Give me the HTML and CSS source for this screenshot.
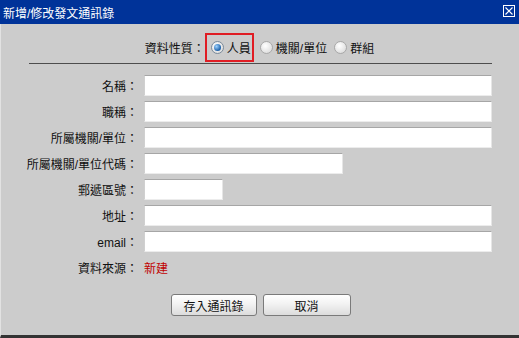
FILE: index.html
```html
<!DOCTYPE html>
<html lang="zh-Hant">
<head>
    <meta charset="UTF-8">
    <title>新增/修改發文通訊錄</title>
    <link rel="stylesheet" href="styles.css">
</head>
<body>
    <div class="dialog">
        <div class="titlebar">
            <span class="title">新增/修改發文通訊錄</span>
            <span class="close-btn">
                <svg width="12" height="12" viewBox="0 0 12 12">
                    <rect x="0.5" y="0.5" width="11" height="11" fill="none" stroke="#fff" stroke-width="1"/>
                    <path d="M2.5 2.5 L9.5 9.5 M9.5 2.5 L2.5 9.5" stroke="#fff" stroke-width="1.2"/>
                </svg>
            </span>
        </div>

        <div class="content">
            <div class="type-row">
                <span class="type-label">資料性質：</span>
                <span class="type-options">
                    <label class="option highlight"><span class="radio checked"></span>人員</label>
                    <label class="option"><span class="radio"></span>機關/單位</label>
                    <label class="option"><span class="radio"></span>群組</label>
                </span>
            </div>
            <div class="divider"></div>

            <div class="form-grid">
                <span class="field-label">名稱：</span>
                <span class="field"><input type="text" class="text-input"></span>

                <span class="field-label">職稱：</span>
                <span class="field"><input type="text" class="text-input"></span>

                <span class="field-label">所屬機關/單位：</span>
                <span class="field"><input type="text" class="text-input"></span>

                <span class="field-label">所屬機關/單位代碼：</span>
                <span class="field"><input type="text" class="text-input code-input"></span>

                <span class="field-label">郵遞區號：</span>
                <span class="field"><input type="text" class="text-input zip-input"></span>

                <span class="field-label">地址：</span>
                <span class="field"><input type="text" class="text-input"></span>

                <span class="field-label">email：</span>
                <span class="field"><input type="text" class="text-input"></span>

                <span class="field-label">資料來源：</span>
                <span class="field source">新建</span>
            </div>

            <div class="actions">
                <button class="btn btn-save">存入通訊錄</button>
                <button class="btn btn-cancel">取消</button>
            </div>
        </div>
    </div>
</body>
</html>
```

FILE: styles.css
```css
body {
    margin: 0;
    font-family: "Liberation Sans", "Noto Sans CJK TC", sans-serif;
    font-size: 12px;
    color: #111;
    background: #cccccc;
}
.dialog {
    width: 519px;
    height: 338px;
    box-sizing: border-box;
    background: #cccccc;
    border-left: 1px solid #e2e2e2;
    border-bottom: 3px solid #333;
    display: flex;
    flex-direction: column;
}
.titlebar {
    height: 24px;
    background: #003399;
    color: #fff;
    display: flex;
    align-items: center;
    justify-content: space-between;
    padding: 0 4px 0 3px;
    margin-left: -1px;
}
.title {
    font-size: 12px;
}
.close-btn {
    display: flex;
    margin-top: -2px;
}
.content {
    flex: 1;
}
.type-row {
    display: flex;
    justify-content: center;
    align-items: center;
    margin-top: 9px;
    height: 29px;
    padding-left: 2px;
}
.type-options {
    display: flex;
    align-items: center;
}
.option {
    display: flex;
    align-items: center;
    height: 25px;
    padding: 0 1px 0 4px;
    margin-right: 2px;
}
.option.highlight {
    border: 2px solid #e01d24;
    padding-right: 1px;
}
.radio {
    width: 11px;
    height: 11px;
    border-radius: 50%;
    border: 1px solid #a8a8a8;
    background: radial-gradient(circle at 40% 35%, #ffffff, #d4d4d4);
    margin-right: 3px;
    position: relative;
}
.radio.checked {
    border-color: #7a8a9a;
}
.radio.checked::after {
    content: "";
    position: absolute;
    left: 2px;
    top: 2px;
    width: 7px;
    height: 7px;
    border-radius: 50%;
    background: radial-gradient(circle at 35% 35%, #9fd3ff, #1a5fa8 70%);
}
.divider {
    margin: 1px 27px 0 28px;
    border-top: 1px solid #4d4d4d;
    height: 0;
}
.form-grid {
    display: grid;
    grid-template-columns: 137px 1fr;
    grid-auto-rows: 21px;
    column-gap: 6px;
    row-gap: 5px;
    margin-top: 11px;
    padding-right: 27px;
}
.field-label {
    text-align: right;
    display: flex;
    align-items: center;
    justify-content: flex-end;
    white-space: nowrap;
}
.field {
    display: flex;
    align-items: center;
}
.text-input {
    box-sizing: border-box;
    width: 100%;
    height: 21px;
    margin: 0;
    border: 1px solid;
    border-color: #a6a6a6 #e6e6e6 #ececec #d0d0d0;
    background: #fff;
    padding: 0 3px;
    font: inherit;
}
.code-input {
    width: 199px;
}
.zip-input {
    width: 79px;
}
.source {
    color: #c00000;
}
.actions {
    display: flex;
    justify-content: center;
    gap: 6px;
    margin-top: 16px;
    padding-left: 1px;
}
.btn {
    height: 22px;
    box-sizing: border-box;
    border: 1px solid #7a7a7a;
    border-radius: 3px;
    background: linear-gradient(#ffffff, #f2f2f2 45%, #dcdcdc);
    font: inherit;
    font-size: 12px;
    color: #111;
    padding: 0;
}
.btn-save {
    width: 86px;
}
.btn-cancel {
    width: 88px;
}
```
